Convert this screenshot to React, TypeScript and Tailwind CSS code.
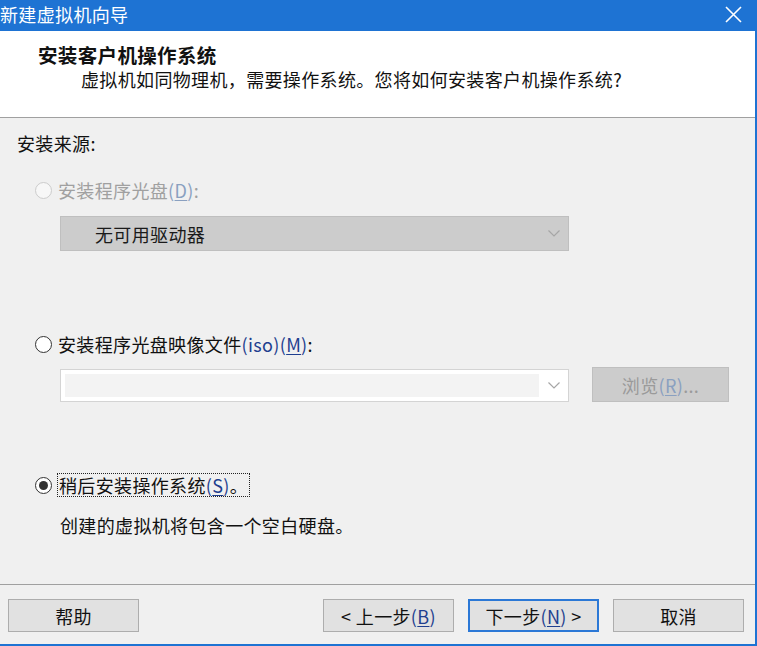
import React from "react";

const font = "font-['Microsoft_YaHei','Noto_Sans_CJK_SC',sans-serif]";

const Chevron = ({ color = "#a6a6a6" }: { color?: string }) => (
    <svg width="12" height="7" viewBox="0 0 12 7" fill="none">
        <polyline points="0.5,0.5 6,6 11.5,0.5" stroke={color} strokeWidth="1.2" />
    </svg>
);

const Radio = ({ checked = false, disabled = false }: { checked?: boolean; disabled?: boolean }) => (
    <div
        className={`w-[17px] h-[17px] rounded-full border flex items-center justify-center shrink-0 ${
            disabled ? "border-[#cccccc] bg-[#f7f7f7]" : "border-[#333333] bg-white"
        }`}
    >
        {checked && <div className="w-[9px] h-[9px] rounded-full bg-[#333333]" />}
    </div>
);

const Mnemonic = ({ k, gray = false }: { k: string; gray?: boolean }) => (
    <span className={gray ? "text-[#8aa0c0]" : "text-[#1f3f8f]"}>
        (<span className="underline underline-offset-2">{k}</span>)
    </span>
);

const Button = ({ children, primary = false }: { children: React.ReactNode; primary?: boolean }) => (
    <div
        className={`w-[131px] h-[33px] flex items-center justify-center bg-[#e1e1e1] text-[18px] text-[#111] ${
            primary ? "border-2 border-[#2b78d6]" : "border border-[#adadad]"
        }`}
    >
        {children}
    </div>
);

export default function App() {
    return (
        <div className={`w-[757px] h-[646px] flex flex-col bg-[#f0f0f0] border-r-2 border-b-2 border-[#1e73d3] ${font} text-[18px] leading-[24px] tracking-[0.35px] text-[#111]`}>

            {/* Title bar */}
            <div className="h-[31px] shrink-0 bg-[#1e73d3] flex items-center justify-between text-white">
                <div className="-mt-[3px] text-[18px]">新建虚拟机向导</div>
                <svg width="17" height="17" viewBox="0 0 17 17" className="mr-[13px] -mt-[2px]">
                    <path d="M1 1 L16 16 M16 1 L1 16" stroke="white" strokeWidth="1.6" />
                </svg>
            </div>

            {/* Header */}
            <div className="h-[87px] shrink-0 bg-white border-b border-[#a0a0a0] pt-[12px]">
                <div className="pl-[38px] font-bold text-[19.5px]">安装客户机操作系统</div>
                <div className="pl-[81px]">虚拟机如同物理机，需要操作系统。您将如何安装客户机操作系统?</div>
            </div>

            {/* Body */}
            <div className="flex-1 flex flex-col">
                <div className="mt-[13px] pl-[17px]">安装来源:</div>

                <div className="mt-[23px] pl-[35px] flex items-center gap-[6px] text-[#a0a0a0]">
                    <Radio disabled />
                    <span>
                        安装程序光盘<Mnemonic k="D" gray />:
                    </span>
                </div>

                <div className="mt-[14px] ml-[60px] w-[509px] h-[35px] bg-[#cccccc] border border-[#bfbfbf] flex items-center justify-between pl-[34px] pr-[8px]">
                    <span className="text-[#1a1a1a]">无可用驱动器</span>
                    <Chevron />
                </div>

                <div className="mt-[81px] pl-[35px] flex items-center gap-[6px]">
                    <Radio />
                    <span>
                        安装程序光盘映像文件<span className="text-[#1f3f8f]">(iso)</span>
                        <Mnemonic k="M" />:
                    </span>
                </div>

                <div className="mt-[11px] ml-[60px] flex items-end gap-[23px]">
                    <div className="w-[509px] h-[33px] bg-white border border-[#d4d4d4] flex items-center pl-[4px] py-[4px]">
                        <div className="w-[474px] h-full bg-[#f3f3f3]" />
                        <div className="flex-1 flex justify-center">
                            <Chevron />
                        </div>
                    </div>
                    <div className="w-[137px] h-[35px] bg-[#cccccc] border border-[#bfbfbf] flex items-center justify-center text-[#9a9a9a]">
                        浏览<Mnemonic k="R" gray />...
                    </div>
                </div>

                <div className="mt-[71px] pl-[35px] flex items-center gap-[5px]">
                    <Radio checked />
                    <span className="border border-dotted border-[#222] px-[1px] leading-[22px]">
                        稍后安装操作系统<Mnemonic k="S" />。
                    </span>
                </div>

                <div className="mt-[16px] pl-[60px]">创建的虚拟机将包含一个空白硬盘。</div>
            </div>

            {/* Footer */}
            <div className="h-[60px] shrink-0 border-t border-[#a0a0a0] flex items-start pt-[14px] pl-[8px] pr-[11px]">
                <Button>帮助</Button>
                <div className="flex-1" />
                <div className="flex gap-[14px]">
                    <Button>
                        &lt;&nbsp;上一步<Mnemonic k="B" />
                    </Button>
                    <Button primary>
                        下一步<Mnemonic k="N" />&nbsp;&gt;
                    </Button>
                    <Button>取消</Button>
                </div>
            </div>
        </div>
    );
}
